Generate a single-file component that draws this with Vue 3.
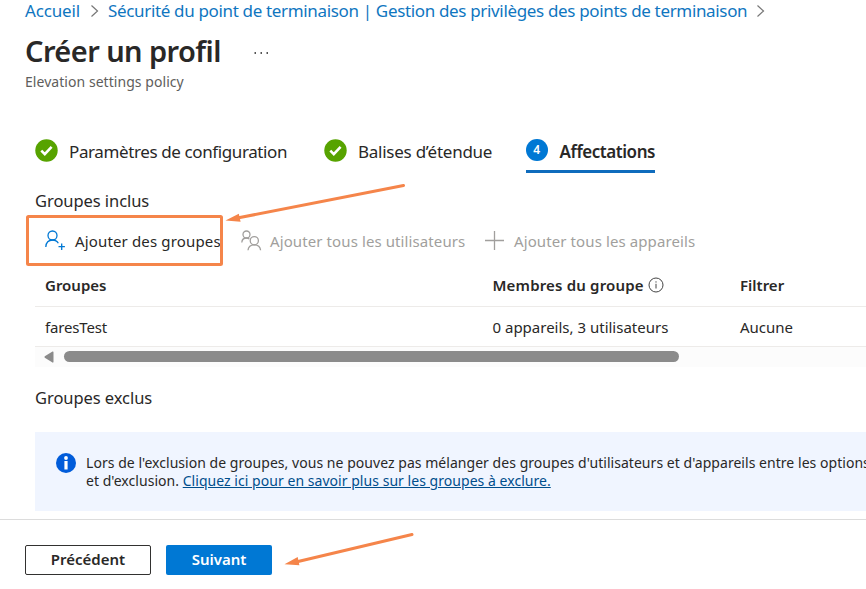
<template>
  <div class="page">

    <!-- BREADCRUMB -->
    <nav class="breadcrumb">
      <a class="crumb-home">Accueil</a>
      <svg class="chevron" width="9" height="14" viewBox="0 0 9 14"><path d="M1.5 1.5 7.500 7l-6 5.500" /></svg>
      <a class="crumb-page">Sécurité du point de terminaison | Gestion des privilèges des points de terminaison</a>
      <svg class="chevron" width="9" height="14" viewBox="0 0 9 14"><path d="M1.500 1.500 7.500 7l-6 5.500" /></svg>
    </nav>

    <!-- TITLE -->
    <header class="title-row">
      <h1>Créer un profil</h1>
      <button class="more" aria-label="Plus">
        <svg width="16" height="4" viewBox="0 0 16 4"><path d="M1.500 1h1.500v2H1.500zM7.500 1H9v2H7.500zM13.500 1H15v2h-1.500z" /></svg>
      </button>
    </header>
    <p class="subtitle">Elevation settings policy</p>

    <!-- STEPS -->
    <div class="steps">
      <div
        class="step"
        v-for="step in steps"
        :key="step.label"
        :class="[step.id, { active: step.number }]"
      >
        <svg v-if="!step.number" class="step-icon" width="23" height="23" viewBox="0 0 23 23">
          <circle cx="11.500" cy="11.500" r="11.200" fill="#57a300" />
          <path d="M6.300 11.600l3.500 3.600 6.800-7.300" fill="none" stroke="#fff" stroke-width="2.600" />
        </svg>
        <span v-else class="step-number">{{ step.number }}</span>
        <span class="step-label">{{ step.label }}</span>
      </div>
    </div>

    <!-- INCLUDED GROUPS -->
    <h2 class="included">Groupes inclus</h2>

    <div class="commands">
      <button class="command add-groups">
        <svg width="22" height="22" viewBox="0 0 22 22">
          <circle cx="7.500" cy="5.500" r="4.500" />
          <path d="M.8 17c.3-4.300 3-7 6.800-7 2.500 0 4.500 1.100 5.700 3.200M16.700 13.500v6.400M13.500 16.700h6.400" />
        </svg>
        <span>Ajouter des groupes</span>
      </button>
      <button class="command add-users" disabled>
        <svg width="21" height="22" viewBox="0 0 21 22">
          <circle cx="5.500" cy="4.500" r="3.500" />
          <path d="M.8 12.500c.2-2.900 2-4.500 4.700-4.500 1 0 2 .3 2.800.9" />
          <circle cx="13.300" cy="10.700" r="4.100" />
          <path d="M7 20.300c.3-3.500 2.700-5.500 6.300-5.500s6 2 6.300 5.500" />
        </svg>
        <span>Ajouter tous les utilisateurs</span>
      </button>
      <button class="command add-devices" disabled>
        <svg width="20" height="20" viewBox="0 0 20 20"><path d="M9.500 0v19M0 9.500h19" /></svg>
        <span>Ajouter tous les appareils</span>
      </button>
    </div>

    <!-- TABLE -->
    <div class="table">
      <div class="grid header">
        <div class="col-groups">Groupes</div>
        <div class="members">
          <span>Membres du groupe</span>
          <svg width="16" height="16" viewBox="0 0 16 16">
            <circle cx="8" cy="8" r="7" />
            <path d="M8 6.800v4.700M8 4.300v1.300" />
          </svg>
        </div>
        <div class="col-filter">Filtrer</div>
      </div>
      <div class="grid row" v-for="group in groups" :key="group.name">
        <div class="cell-name">{{ group.name }}</div>
        <div class="cell-members">{{ group.members }}</div>
        <div class="cell-filter">{{ group.filter }}</div>
      </div>
      <div class="scrollbar">
        <svg width="10" height="12" viewBox="0 0 10 12"><path d="M8.500.5Q9.500 0 9.500 1.500v9q0 1.500-1 1L.8 6.800Q0 6 .8 5.200z" /></svg>
        <div class="thumb"></div>
      </div>
    </div>

    <!-- EXCLUDED GROUPS -->
    <h2 class="excluded">Groupes exclus</h2>

    <div class="info">
      <svg width="20" height="20" viewBox="0 0 20 20">
        <circle cx="10" cy="10" r="10" fill="#015cda" />
        <circle cx="10" cy="5" r="1.900" fill="#fff" />
        <path d="M8.400 8h3.200v8.500H8.400z" fill="#fff" />
      </svg>
      <p>
        Lors de l'exclusion de groupes, vous ne pouvez pas mélanger des groupes d'utilisateurs et d'appareils entre les options<br />
        et d'exclusion. <a>Cliquez ici pour en savoir plus sur les groupes à exclure.</a>
      </p>
    </div>

    <!-- FOOTER -->
    <footer class="footer">
      <button class="previous">Précédent</button>
      <button class="next">Suivant</button>
    </footer>

    <!-- ANNOTATIONS -->
    <svg class="annotations" width="866" height="589" viewBox="0 0 866 589">
      <rect x="27.500" y="216.500" width="194" height="48" rx="1" />
      <path d="M403.500 185.500 236 218.300M412 534.500 296 562" />
      <path class="head" d="M225.500 220.500l13.300-6.800 1.800 8.100zM284.500 564.300l13.200-7.300 1.700 8.300z" />
    </svg>

  </div>
</template>

<script setup>
import { ref } from 'vue'

const steps = ref([
  { id: 'settings', label: 'Paramètres de configuration' },
  { id: 'tags', label: 'Balises d’étendue' },
  { id: 'assignments', label: 'Affectations', number: 4 }
])

const groups = ref([
  { name: 'faresTest', members: '0 appareils, 3 utilisateurs', filter: 'Aucune' }
])
</script>

<style>
body {
  margin: 0;
  background: #fff;
}
</style>

<style scoped>
.page {
  position: relative;
  width: 100%;
  height: 589px;
  overflow: hidden;
  background: #fff;
  color: #292827;
  font-family: "Noto Sans", "Open Sans", sans-serif;
  font-size: 15px;
  white-space: nowrap;
}

h1, h2, p {
  margin: 0;
}

button {
  padding: 0;
  border: none;
  background: none;
  font: inherit;
  color: inherit;
}

svg {
  flex: none;
}

/* BREADCRUMB */
.breadcrumb {
  display: flex;
  align-items: center;
  height: 22px;
  padding-left: 25px;
  font-size: 17px;
  line-height: 22px;
  color: #0f76bf;
}

.crumb-home {
  width: 65px;
  letter-spacing: -0.150px;
}

.crumb-page {
  width: 648px;
  margin-left: 9px;
  letter-spacing: -0.340px;
}

.chevron {
  fill: none;
  stroke: #777;
  stroke-width: 1.200;
}

/* TITLE */
.title-row {
  display: flex;
  align-items: center;
  height: 46px;
  margin-top: 6px;
  padding-left: 25px;
}

h1 {
  width: 228px;
  font-size: 29px;
  font-weight: 600;
  letter-spacing: -0.570px;
  line-height: 46px;
}

.more {
  display: flex;
  padding-top: 4px;
}

.more svg {
  fill: #555;
}

.subtitle {
  margin-top: -1px;
  padding-left: 25px;
  font-size: 14px;
  line-height: 18px;
  letter-spacing: 0.050px;
  color: #605e5c;
}

/* STEPS */
.steps {
  display: flex;
  height: 42px;
  margin: 40px 0 0 35px;
}

.step {
  display: flex;
  align-items: center;
  box-sizing: border-box;
  height: 42px;
  font-size: 17px;
  border-bottom: 3px solid transparent;
}

.step-icon {
  margin-top: -1px;
}

.step-label {
  margin-left: 11px;
  padding-top: 2px;
}

.settings {
  width: 289px;
  letter-spacing: -0.390px;
}

.tags {
  width: 202px;
  letter-spacing: -0.250px;
}

.active {
  width: 129px;
  border-color: #0f6cbd;
  font-weight: 600;
  letter-spacing: -0.450px;
}

.active .step-label {
  margin-left: 12px;
}

.step-number {
  width: 22px;
  height: 22px;
  margin-top: -1px;
  border-radius: 50%;
  background: #0078d4;
  color: #fff;
  font-size: 12px;
  line-height: 21px;
  letter-spacing: 0;
  text-align: center;
}

/* SECTION TITLES */
h2 {
  padding-left: 35px;
  font-size: 16.500px;
  font-weight: 400;
  line-height: 24px;
  letter-spacing: -0.060px;
}

.included {
  margin-top: 16px;
}

/* COMMANDS */
.commands {
  display: flex;
  align-items: center;
  height: 48px;
  margin-top: 4px;
  padding: 0 0 2px 45px;
}

.command {
  display: flex;
  align-items: center;
  letter-spacing: 0.100px;
}

.command svg {
  fill: none;
  stroke: #a19f9d;
  stroke-width: 1.300;
}

.command:disabled {
  color: #a19f9d;
}

.add-groups {
  width: 196px;
  letter-spacing: 0.150px;
}

.add-groups svg {
  stroke: #0078d4;
}

.add-groups span {
  margin-left: 8px;
}

.add-users {
  width: 244px;
}

.add-users span {
  margin-left: 8px;
}

.add-devices span {
  margin-left: 9px;
}

/* TABLE */
.table {
  margin-left: 35px;
}

.grid {
  display: grid;
  grid-template-columns: 447.500px 247.500px 1fr;
  align-items: center;
  box-sizing: border-box;
  height: 40px;
  padding-left: 10px;
  border-bottom: 1px solid #edebe9;
  font-size: 15px;
}

.header {
  padding-bottom: 4px;
  font-weight: 600;
}

.cell-name {
  letter-spacing: -0.150px;
}

.members {
  display: flex;
  align-items: center;
  gap: 4px;
  letter-spacing: 0.180px;
}

.members svg {
  fill: none;
  stroke: #444;
  stroke-width: 1;
}

.scrollbar {
  display: flex;
  align-items: center;
  box-sizing: border-box;
  height: 20px;
  padding: 0 0 1px 9px;
  background: #fcfcfc;
}

.scrollbar svg {
  fill: #8b8b8b;
}

.thumb {
  width: 615px;
  height: 11px;
  margin-left: 10px;
  border-radius: 6px;
  background: #8b8b8b;
}

.excluded {
  margin-top: 19px;
}

/* INFO */
.info {
  display: flex;
  box-sizing: border-box;
  height: 79px;
  margin: 22px 0 0 35px;
  padding: 21px 0 0 21px;
  background: #f0f5ff;
  font-size: 14px;
  line-height: 18px;
  letter-spacing: 0.040px;
}

.info p {
  margin: 1px 0 0 10px;
}

.info a {
  color: #004e8c;
  text-decoration: underline;
}

/* FOOTER */
.footer {
  display: flex;
  gap: 15px;
  margin-top: 8px;
  padding: 25px 0 0 25px;
  border-top: 1px solid #dcdcdc;
  font-weight: 600;
}

.footer button {
  box-sizing: border-box;
  height: 30px;
  padding-bottom: 2px;
  border-radius: 2px;
}

.previous {
  width: 126px;
  border: 1px solid #323130;
}

.next {
  width: 106px;
  background: #0078d4;
  color: #fff;
}

/* ANNOTATIONS */
.annotations {
  position: absolute;
  top: 0;
  left: 0;
  fill: none;
  stroke: #f5854a;
  stroke-width: 3;
  stroke-linecap: round;
  pointer-events: none;
}

.annotations .head {
  fill: #f5854a;
  stroke: none;
}
</style>
